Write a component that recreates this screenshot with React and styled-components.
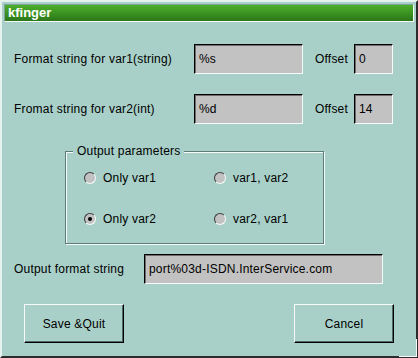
import React from "react";
import styled, { createGlobalStyle } from "styled-components";

const Global = createGlobalStyle`
  html, body { margin: 0; padding: 0; background: #a8d0c8; }
  body { font-family: "Liberation Sans", Arial, sans-serif; font-size: 12px; color: #000; letter-spacing: 0.2px; }
`;

const Frame = styled.div`
  position: relative;
  width: 418px;
  height: 358px;
  box-sizing: border-box;
  border: 2px solid;
  border-color: #e6f2ee #2c2c2c #2c2c2c #e6f2ee;
  padding: 2px;
  background: #a8d0c8;
  display: flex;
  flex-direction: column;
`;

const TitleBar = styled.div`
  height: 18px;
  box-sizing: border-box;
  border: 1px solid;
  border-color: #7f9f99 #f4fbf8 #f4fbf8 #7f9f99;
  background: linear-gradient(#4db02c, #2b7619);
  color: #fff;
  font-weight: bold;
  font-size: 13px;
  letter-spacing: 0;
  line-height: 16px;
  padding-left: 3px;
`;

const Content = styled.div`
  display: flex;
  flex-direction: column;
  padding: 0 0 0 10px;
`;

const Row = styled.div`
  display: flex;
  align-items: center;
  height: 30px;
  margin-top: ${(p) => p.$top}px;
`;

const Label = styled.div`
  width: ${(p) => p.$w}px;
  flex: none;
  white-space: nowrap;
`;

const Field = styled.div`
  width: ${(p) => p.$w}px;
  height: ${(p) => p.$h || 30}px;
  box-sizing: border-box;
  flex: none;
  background: #c2c2c2;
  border: 1px solid;
  border-color: #000 #f6fbfa #f6fbfa #000;
  box-shadow: inset 1px 1px 0 #6c6c6c;
  padding-left: 4px;
  display: flex;
  align-items: center;
  white-space: nowrap;
  overflow: hidden;
`;

const OffsetLabel = styled.div`
  margin-left: 12px;
  width: 39px;
  flex: none;
`;

const Group = styled.div`
  position: relative;
  margin: 27px 0 0 51px;
  width: 259px;
  height: 93px;
  box-sizing: border-box;
  border: 1px solid #5e7c77;
  box-shadow: inset 1px 1px 0 #f4fbf8, 1px 1px 0 #f4fbf8;
  display: grid;
  grid-template-columns: 130px 110px;
  grid-template-rows: 20px 20px;
  row-gap: 21px;
  padding: 16px 0 0 18px;
`;

const Legend = styled.span`
  position: absolute;
  top: -8px;
  left: 7px;
  padding: 0 4px;
  background: #a8d0c8;
  line-height: 14px;
`;

const RadioItem = styled.div`
  display: flex;
  align-items: center;
  gap: 7px;
`;

const RadioDot = styled.span`
  width: 12px;
  height: 12px;
  box-sizing: border-box;
  border-radius: 50%;
  border: 1px solid;
  border-color: #3a3a3a #f6fbfa #f6fbfa #3a3a3a;
  background: #c2c2c2;
  display: flex;
  align-items: center;
  justify-content: center;
  &::after {
    content: "";
    width: 4px;
    height: 4px;
    border-radius: 50%;
    background: ${(p) => (p.$on ? "#000" : "transparent")};
  }
`;

const ButtonRow = styled.div`
  display: flex;
  margin-top: 20px;
  padding-left: 20px;
  gap: 170px;
`;

const Button = styled.div`
  width: 100px;
  height: 39px;
  box-sizing: border-box;
  border: 1px solid;
  border-color: #f6fbfa #000 #000 #f6fbfa;
  box-shadow: inset -1px -1px 0 #4e6c67;
  display: flex;
  align-items: center;
  justify-content: center;
`;

const Grip = styled.div`
  position: absolute;
  right: -1px;
  bottom: -1px;
  width: 18px;
  height: 18px;
  box-sizing: border-box;
  border-right: 1px solid #f6fbfa;
  border-bottom: 1px solid #f6fbfa;
`;

const Radio = ({ on, children }) => (
  <RadioItem>
    <RadioDot $on={on} />
    <span>{children}</span>
  </RadioItem>
);

export default function App() {
  return (
    <>
      <Global />
      <Frame>
        <TitleBar>kfinger</TitleBar>
        <Content>
          <Row $top={22}>
            <Label $w={180}>Format string for var1(string)</Label>
            <Field $w={109}>%s</Field>
            <OffsetLabel>Offset</OffsetLabel>
            <Field $w={39}>0</Field>
          </Row>
          <Row $top={20}>
            <Label $w={180}>Fromat string for var2(int)</Label>
            <Field $w={109}>%d</Field>
            <OffsetLabel>Offset</OffsetLabel>
            <Field $w={39}>14</Field>
          </Row>
          <Group>
            <Legend>Output parameters</Legend>
            <Radio>Only var1</Radio>
            <Radio>var1, var2</Radio>
            <Radio on>Only var2</Radio>
            <Radio>var2, var1</Radio>
          </Group>
          <Row $top={10}>
            <Label $w={130}>Output format string</Label>
            <Field $w={239}>port%03d-ISDN.InterService.com</Field>
          </Row>
        </Content>
        <ButtonRow>
          <Button>Save &amp;Quit</Button>
          <Button>Cancel</Button>
        </ButtonRow>
        <Grip />
      </Frame>
    </>
  );
}
